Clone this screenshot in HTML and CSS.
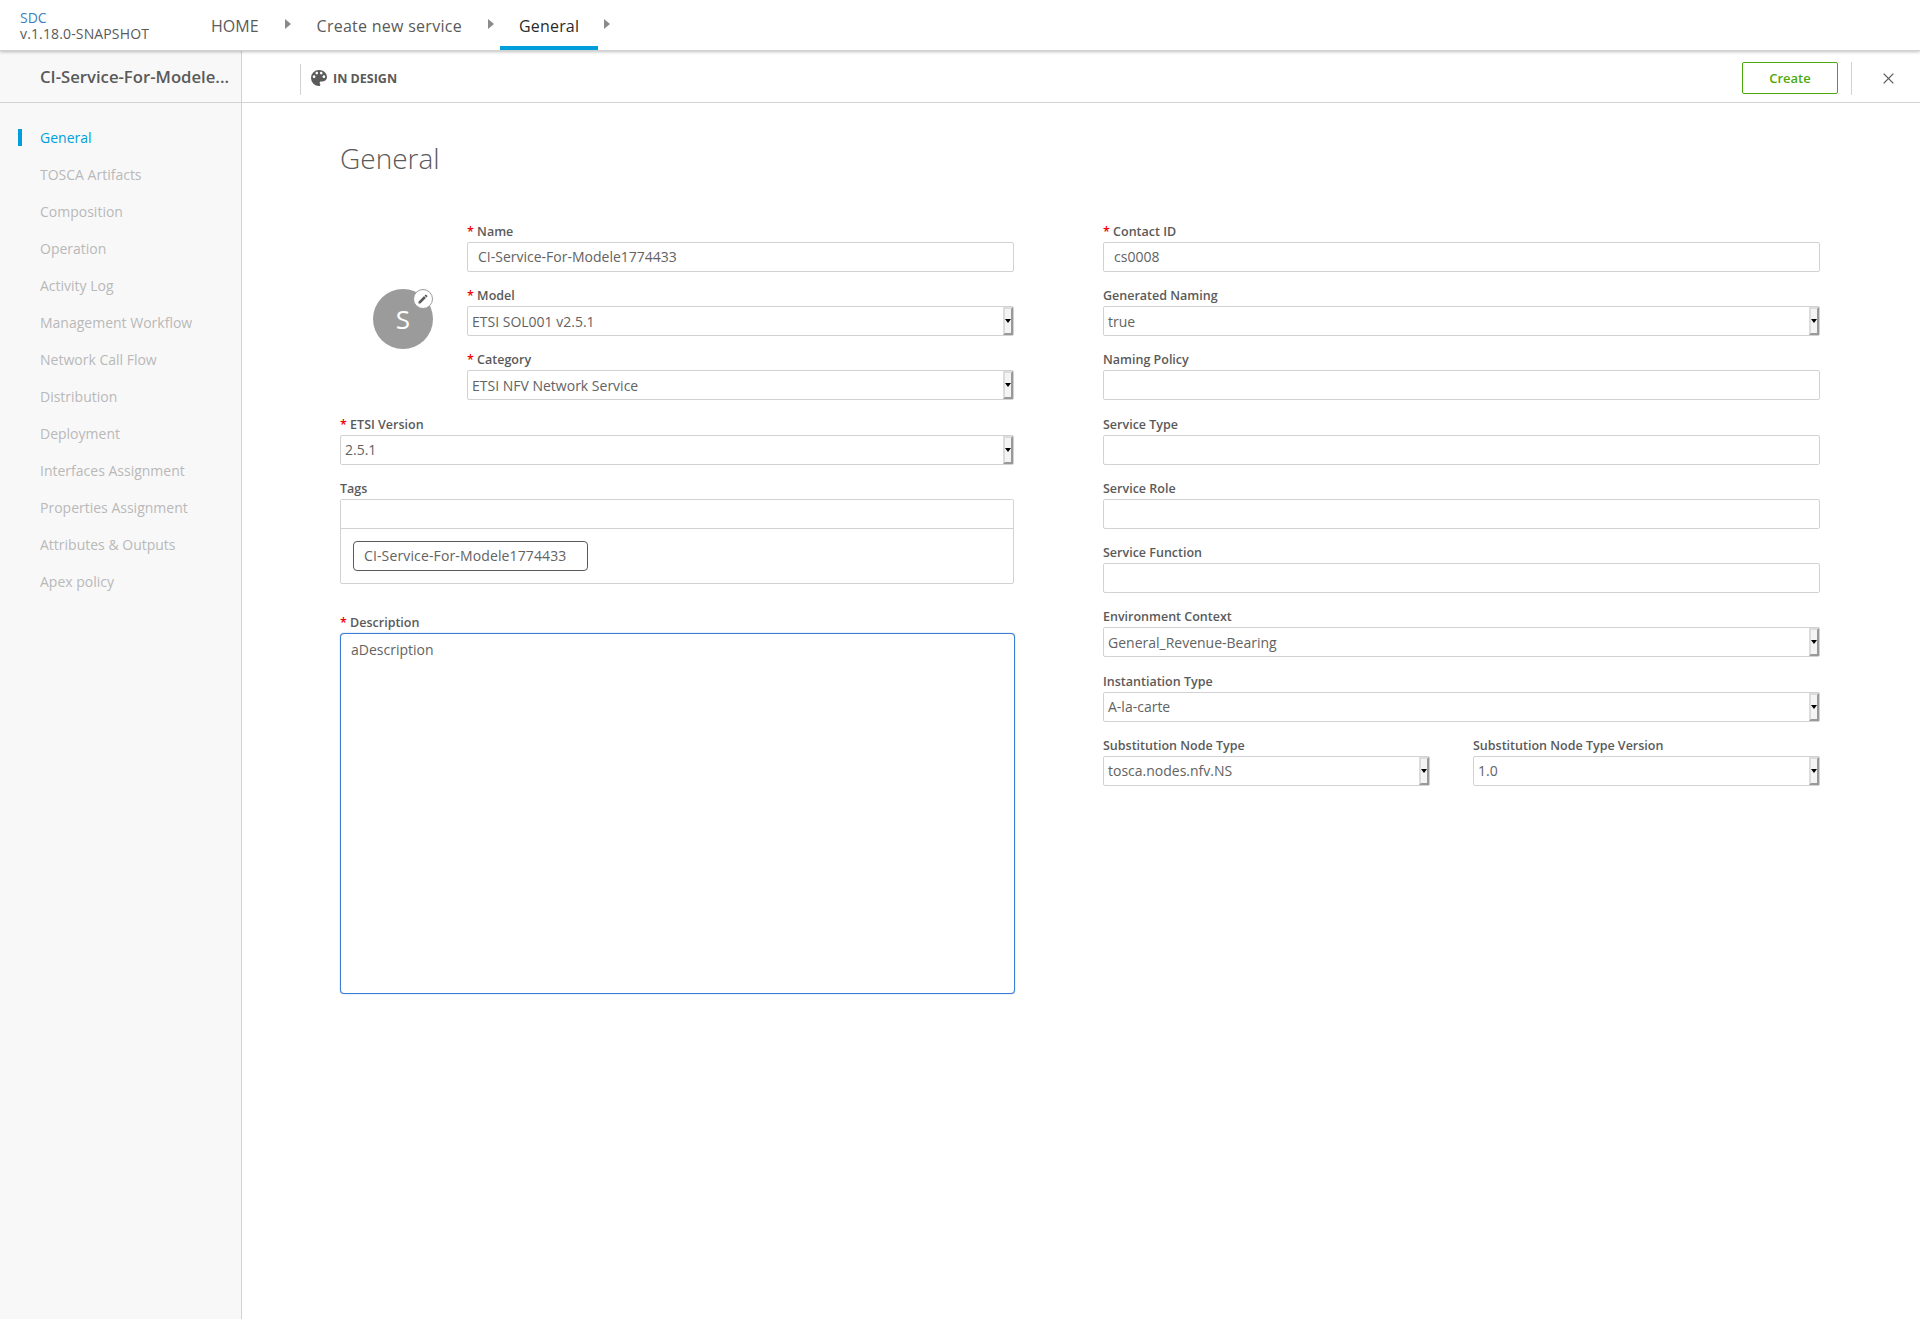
FILE: index.html
```html
<!DOCTYPE html>
<html lang="en">
<head>
    <meta charset="UTF-8">
    <title>SDC - General</title>
    <link rel="stylesheet" href="styles.css">
</head>
<body>
    <header class="topbar">
        <div class="brand">
            <div class="brand-name">SDC</div>
            <div class="brand-version">v.1.18.0-SNAPSHOT</div>
        </div>
        <nav class="crumbs">
            <a class="crumb crumb-home">HOME</a>
            <span class="crumb-arrow"></span>
            <a class="crumb crumb-service">Create new service</a>
            <span class="crumb-arrow"></span>
            <a class="crumb active">General</a>
            <span class="crumb-arrow"></span>
        </nav>
    </header>

    <div class="page">
        <aside class="sidebar">
            <div class="sidebar-title">CI-Service-For-Modele...</div>
            <ul class="menu">
                <li class="active">General</li>
                <li>TOSCA Artifacts</li>
                <li>Composition</li>
                <li>Operation</li>
                <li>Activity Log</li>
                <li>Management Workflow</li>
                <li>Network Call Flow</li>
                <li>Distribution</li>
                <li>Deployment</li>
                <li>Interfaces Assignment</li>
                <li>Properties Assignment</li>
                <li>Attributes &amp; Outputs</li>
                <li>Apex policy</li>
            </ul>
        </aside>

        <main class="main">
            <div class="toolbar">
                <div class="status">
                    <svg class="status-icon" viewBox="3 3 18 18"><path d="M12 3a9 9 0 0 0 0 18c.83 0 1.5-.67 1.5-1.5 0-.39-.15-.74-.39-1.01-.23-.26-.38-.61-.38-.99 0-.83.67-1.5 1.5-1.5H16c2.76 0 5-2.24 5-5 0-4.42-4.03-8-9-8zm-5.5 9c-.83 0-1.5-.67-1.5-1.5S5.67 9 6.5 9 8 9.67 8 10.5 7.33 12 6.5 12zm3-4C8.67 8 8 7.33 8 6.5S8.67 5 9.5 5s1.5.67 1.5 1.5S10.33 8 9.5 8zm5 0c-.83 0-1.5-.67-1.5-1.5S13.67 5 14.5 5s1.5.67 1.5 1.5S15.33 8 14.5 8zm3 4c-.83 0-1.5-.67-1.5-1.5S16.67 9 17.5 9s1.5.67 1.5 1.5-.67 1.5-1.5 1.5z"/></svg>
                    <span>IN DESIGN</span>
                </div>
                <button class="create-btn">Create</button>
                <div class="close-box">
                    <svg class="close-icon" viewBox="0 0 12 12"><path d="M.7.7l10.6 10.6M11.3.7L.7 11.3"/></svg>
                </div>
            </div>

            <div class="content">
                <h1>General</h1>
                <div class="columns">
                    <div class="col-left">
                        <div class="top-fields">
                            <div class="avatar-box">
                                <div class="avatar">
                                    S
                                    <span class="avatar-edit">
                                        <svg viewBox="0 0 24 24"><path d="M3 17.25V21h3.75L17.81 9.94l-3.75-3.75L3 17.25zM20.71 7.04a1 1 0 0 0 0-1.41l-2.34-2.34a1 1 0 0 0-1.41 0l-1.83 1.83 3.75 3.75 1.83-1.83z"/></svg>
                                    </span>
                                </div>
                            </div>
                            <div class="top-inputs">
                                <div class="field">
                                    <label class="required">Name</label>
                                    <input type="text" value="CI-Service-For-Modele1774433">
                                </div>
                                <div class="field">
                                    <label class="required">Model</label>
                                    <div class="select"><span>ETSI SOL001 v2.5.1</span><i></i></div>
                                </div>
                                <div class="field">
                                    <label class="required">Category</label>
                                    <div class="select"><span>ETSI NFV Network Service</span><i></i></div>
                                </div>
                            </div>
                        </div>
                        <div class="field">
                            <label class="required">ETSI Version</label>
                            <div class="select"><span>2.5.1</span><i></i></div>
                        </div>
                        <div class="field tags-field">
                            <label>Tags</label>
                            <div class="tags-box">
                                <input type="text">
                                <div class="tags-list">
                                    <span class="tag">CI-Service-For-Modele1774433</span>
                                </div>
                            </div>
                        </div>
                        <div class="field">
                            <label class="required">Description</label>
                            <textarea>aDescription</textarea>
                        </div>
                    </div>

                    <div class="col-right">
                        <div class="field">
                            <label class="required">Contact ID</label>
                            <input type="text" value="cs0008">
                        </div>
                        <div class="field">
                            <label>Generated Naming</label>
                            <div class="select"><span>true</span><i></i></div>
                        </div>
                        <div class="field">
                            <label>Naming Policy</label>
                            <input type="text">
                        </div>
                        <div class="field">
                            <label>Service Type</label>
                            <input type="text">
                        </div>
                        <div class="field">
                            <label>Service Role</label>
                            <input type="text">
                        </div>
                        <div class="field">
                            <label>Service Function</label>
                            <input type="text">
                        </div>
                        <div class="field">
                            <label>Environment Context</label>
                            <div class="select"><span>General_Revenue-Bearing</span><i></i></div>
                        </div>
                        <div class="field">
                            <label>Instantiation Type</label>
                            <div class="select"><span>A-la-carte</span><i></i></div>
                        </div>
                        <div class="field-row">
                            <div class="field">
                                <label>Substitution Node Type</label>
                                <div class="select"><span>tosca.nodes.nfv.NS</span><i></i></div>
                            </div>
                            <div class="field">
                                <label>Substitution Node Type Version</label>
                                <div class="select"><span>1.0</span><i></i></div>
                            </div>
                        </div>
                    </div>
                </div>
            </div>
        </main>
    </div>
</body>
</html>
```

FILE: styles.css
```css
* {
    box-sizing: border-box;
}
html, body {
    margin: 0;
    height: 100%;
}
body {
    font-family: "Open Sans", "Liberation Sans", sans-serif;
    font-size: 14px;
    color: #5a5a5a;
    background: #fff;
    display: flex;
    flex-direction: column;
    overflow: hidden;
}

/* top bar */
.topbar {
    height: 51px;
    flex: none;
    display: flex;
    background: #fff;
    border-bottom: 1px solid #d2d2d2;
    box-shadow: 0 1px 3px rgba(0,0,0,0.25);
    position: relative;
    z-index: 2;
}
.brand {
    width: 211px;
    padding: 10px 0 0 20px;
    font-size: 14px;
    line-height: 16px;
}
.brand-name {
    color: #3b7fc0;
}
.brand-version {
    color: #5a5a5a;
    letter-spacing: 0.14px;
}
.crumbs {
    display: flex;
    align-items: stretch;
}
.crumb {
    font-size: 16px;
    line-height: 52px;
    height: 50px;
    color: #5a5a5a;
}
.crumb-service {
    margin-left: 26px;
    letter-spacing: 0.27px;
}
.crumb.active {
    margin-left: 0;
    padding: 0 19px;
    color: #2b2b2b;
    font-weight: 500;
    letter-spacing: 0.2px;
    border-bottom: 4px solid #009fdb;
    line-height: 52px;
}
.crumb-arrow {
    width: 0;
    height: 0;
    margin: 19px 0 0 26px;
    border-left: 6px solid #8a8a8a;
    border-top: 5px solid transparent;
    border-bottom: 5px solid transparent;
}
.crumb-service + .crumb-arrow {
    margin-right: 6px;
}
.crumb.active + .crumb-arrow {
    margin-left: 6px;
}

/* layout */
.page {
    flex: 1;
    display: flex;
    min-height: 0;
}
.sidebar {
    width: 242px;
    flex: none;
    background: #f8f8f8;
    border-right: 1px solid #d2d2d2;
}
.sidebar-title {
    height: 52px;
    padding: 0 0 0 40px;
    font-size: 16.7px;
    font-weight: 600;
    line-height: 52px;
    color: #5a5a5a;
    border-bottom: 1px solid #d2d2d2;
    white-space: nowrap;
}
.menu {
    list-style: none;
    margin: 0;
    padding: 16px 0 0;
}
.menu li {
    height: 37px;
    line-height: 37px;
    padding-left: 40px;
    color: #b9b9b9;
    position: relative;
}
.menu li.active {
    color: #009fdb;
}
.menu li.active::before {
    content: "";
    position: absolute;
    left: 18px;
    top: 10px;
    width: 4px;
    height: 17px;
    background: #009fdb;
}

/* toolbar */
.main {
    flex: 1;
    min-width: 0;
}
.toolbar {
    height: 52px;
    padding-top: 2px;
    display: flex;
    align-items: center;
    border-bottom: 1px solid #d2d2d2;
}
.status {
    margin: 0 0 7px 58px;
    height: 31px;
    padding: 0 0 3px 10px;
    border-left: 1px solid #d2d2d2;
    display: flex;
    align-items: center;
    align-self: flex-end;
    font-size: 12.5px;
    font-weight: 700;
    color: #5a5a5a;
    flex: 1;
}
.status-icon {
    width: 16px;
    height: 16px;
    fill: #5a5a5a;
    margin-right: 6px;
}
.create-btn {
    width: 96px;
    height: 32px;
    font-family: inherit;
    font-size: 13px;
    font-weight: 600;
    color: #4ca90c;
    background: #fff;
    border: 1px solid #4ca90c;
    border-radius: 2px;
}
.close-box {
    width: 69px;
    height: 33px;
    margin: 2px 0 0 13px;
    padding-left: 4px;
    border-left: 1px solid #d2d2d2;
    display: flex;
    align-items: center;
    justify-content: center;
}
.close-icon {
    width: 11px;
    height: 11px;
    stroke: #5a5a5a;
    stroke-width: 1.4;
    fill: none;
}

/* form */
.content {
    padding: 0 100px 0 98px;
}
h1 {
    margin: 0;
    padding-top: 35px;
    font-size: 28px;
    font-weight: 300;
    line-height: 40px;
    height: 117.75px;
    color: #5a5a5a;
}
.columns {
    display: flex;
    gap: 89px;
}
.col-left {
    width: 674px;
    flex: none;
}
.col-right {
    flex: 1;
}
.top-fields {
    display: flex;
}
.avatar-box {
    width: 127px;
    flex: none;
    padding: 68px 0 0 33px;
}
.avatar {
    width: 60px;
    height: 60px;
    border-radius: 50%;
    background: #9b9b9b;
    color: #fff;
    font-size: 26px;
    line-height: 60px;
    text-align: center;
    position: relative;
}
.avatar-edit {
    position: absolute;
    top: 0;
    right: 0;
    width: 20px;
    height: 20px;
    border-radius: 50%;
    background: #fff;
    border: 1px solid #9b9b9b;
    display: flex;
    align-items: center;
    justify-content: center;
}
.avatar-edit svg {
    width: 12px;
    height: 12px;
    fill: #5a5a5a;
}
.top-inputs {
    flex: 1;
}
.field {
    margin-bottom: 13.25px;
}
.field label {
    display: block;
    height: 21px;
    font-size: 12.5px;
    font-weight: 600;
    line-height: 21px;
    color: #5a5a5a;
}
.required::before {
    content: "* ";
    color: #f00000;
}
.field input,
.select {
    display: block;
    width: 100%;
    height: 30px;
    font-family: inherit;
    font-size: 14px;
    color: #636363;
    background: #fff;
    border: 1px solid #d2d2d2;
    border-radius: 2px;
    outline: none;
}
.field input {
    padding: 0 10px;
}
.select {
    display: flex;
    align-items: center;
    padding-left: 4px;
}
.select span {
    flex: 1;
}
.select i {
    width: 10px;
    height: 28px;
    background: #f4f4f4;
    border-style: solid;
    border-width: 2px;
    border-color: #dcdcdc #999 #999 #dcdcdc;
    position: relative;
}
.select i::after {
    content: "";
    position: absolute;
    left: 0;
    top: 10px;
    border-left: 3px solid transparent;
    border-right: 3px solid transparent;
    border-top: 4px solid #000;
}
.tags-box {
    height: 85px;
    border: 1px solid #d2d2d2;
    border-radius: 2px;
}
.field .tags-box input {
    height: 29px;
    border: 0;
    border-bottom: 1px solid #d2d2d2;
    border-radius: 0;
}
.tags-list {
    padding: 12px 12px;
}
.tag {
    display: block;
    width: 235px;
    height: 30px;
    padding-left: 10px;
    line-height: 28px;
    color: #636363;
    letter-spacing: 0.13px;
    border: 1px solid #5a5a5a;
    border-radius: 4px;
    white-space: nowrap;
}
.tags-field {
    margin-bottom: 28px;
}
textarea {
    display: block;
    width: 675px;
    height: 361px;
    padding: 4px 10px;
    font-family: inherit;
    font-size: 14px;
    line-height: 24px;
    color: #636363;
    border: 1px solid #3a7fd5;
    box-shadow: 0 0 1px #3a7fd5;
    border-radius: 4px;
    outline: none;
    resize: none;
}
.field-row {
    display: flex;
    gap: 43px;
}
.field-row .field {
    flex: 1;
}
.field-row .field:first-child {
    flex: none;
    width: 327px;
}
```
